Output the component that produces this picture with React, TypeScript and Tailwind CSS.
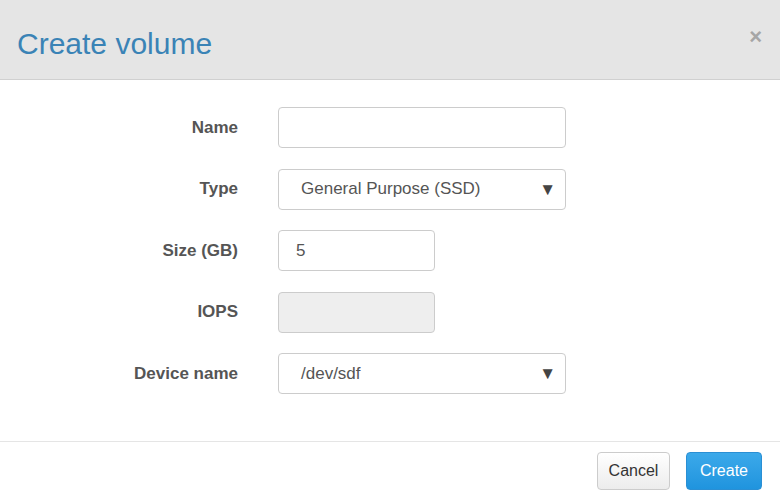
import React from "react";

const font = { fontFamily: '"Liberation Sans", Arial, sans-serif' };

function Row({ label, children }: { label: string; children: React.ReactNode }) {
  return (
    <div className="flex items-center h-[41px]">
      <div className="w-[238px] text-right text-[17px] font-bold text-[#555]">{label}</div>
      <div className="ml-[40px]">{children}</div>
    </div>
  );
}

function Select({ value }: { value: string }) {
  return (
    <div className="w-[288px] h-[41px] border border-[#ccc] rounded-[4px] bg-white flex items-center pl-[22px] pr-[9px] text-[17px] text-[#555]">
      <span className="flex-1">{value}</span>
      <span className="text-[17px] text-[#444] leading-none">▼</span>
    </div>
  );
}

export default function App() {
  return (
    <div className="w-[780px] h-[493px] bg-white overflow-hidden flex flex-col" style={font}>
      <div className="h-[80px] bg-[#e5e5e5] border-b border-[#d0d0d0] flex items-center justify-between pl-[17px] pr-[18px]">
        <div className="text-[30px] text-[#3a83b6] leading-none pt-[9px]">Create volume</div>
        <div className="text-[22px] font-bold text-[#a6a6a6] leading-none pb-[6px]">×</div>
      </div>
      <div className="h-[361px] pt-[27px] flex flex-col gap-[20.5px]">
        <Row label="Name">
          <div className="w-[288px] h-[41px] border border-[#ccc] rounded-[4px] bg-white" />
        </Row>
        <Row label="Type">
          <Select value="General Purpose (SSD)" />
        </Row>
        <Row label="Size (GB)">
          <div className="w-[157px] h-[41px] border border-[#ccc] rounded-[4px] bg-white flex items-center pl-[17px] text-[17px] text-[#555]">5</div>
        </Row>
        <Row label="IOPS">
          <div className="w-[157px] h-[41px] border border-[#ccc] rounded-[4px] bg-[#eeeeee]" />
        </Row>
        <Row label="Device name">
          <Select value="/dev/sdf" />
        </Row>
      </div>
      <div className="flex-1 border-t border-[#e5e5e5] flex justify-end items-start pt-[10px] pr-[18px] gap-[16px]">
        <button className="w-[73px] h-[38px] border border-[#ccc] rounded-[4px] bg-gradient-to-b from-white to-[#ececec] text-[16px] text-[#333]">Cancel</button>
        <button className="w-[76px] h-[38px] border border-[#2a8fd4] rounded-[4px] bg-gradient-to-b from-[#3ba9ea] to-[#1f94de] text-[16px] text-white">Create</button>
      </div>
    </div>
  );
}
